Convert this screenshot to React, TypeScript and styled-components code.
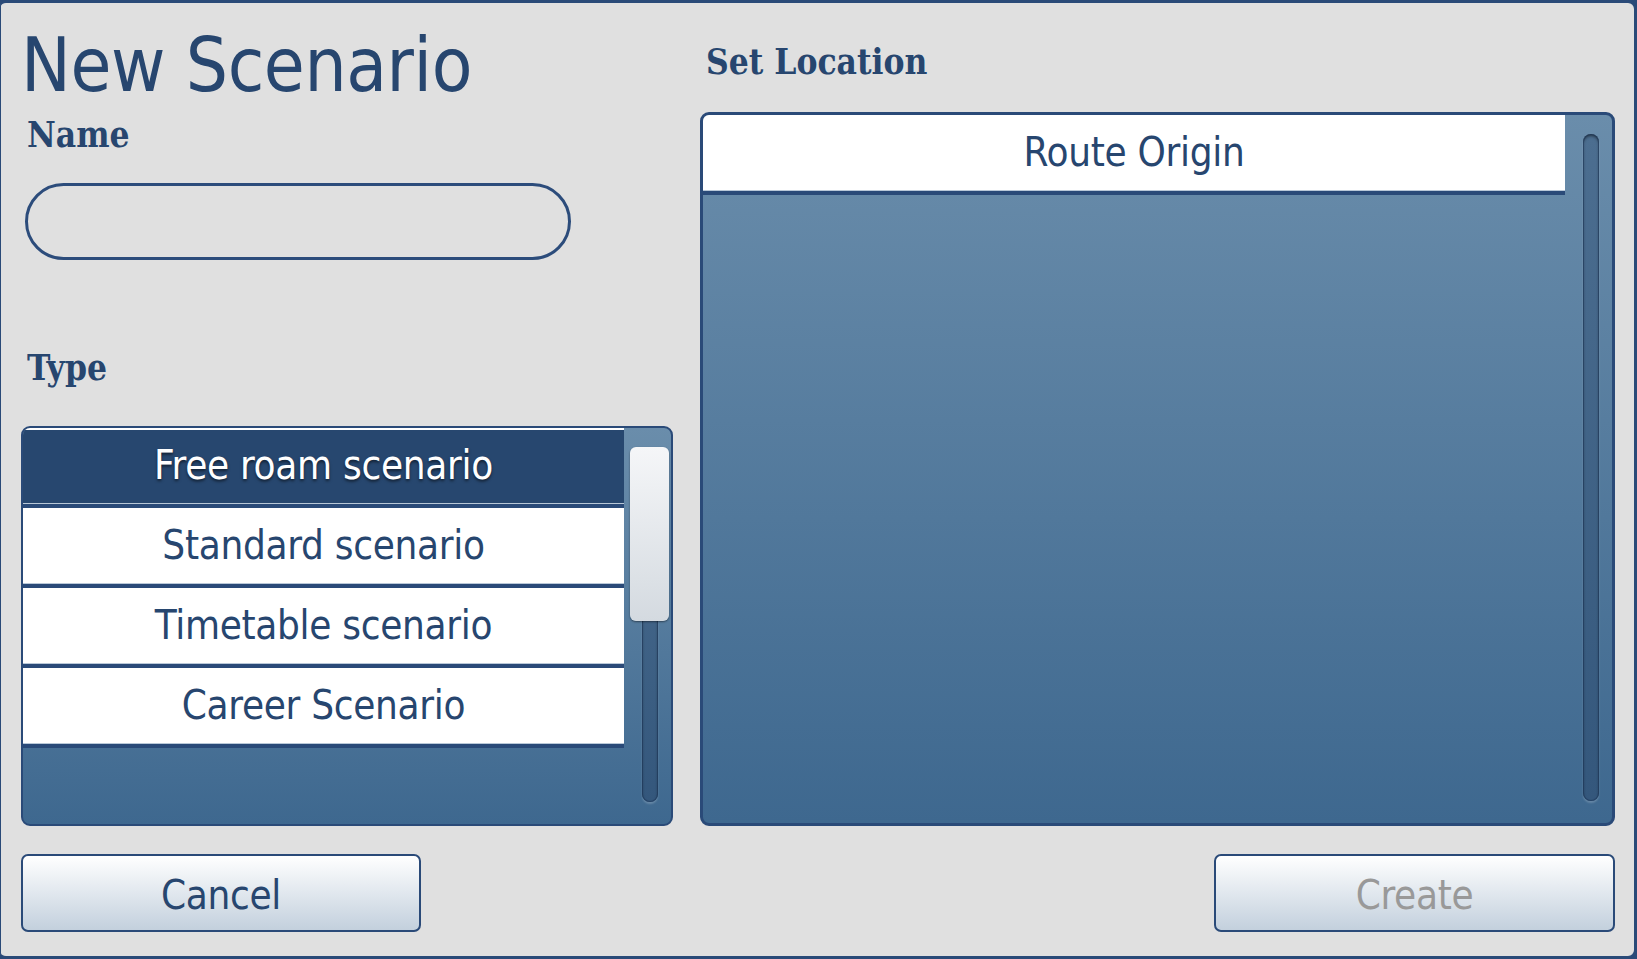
import React from 'react';
import styled, { createGlobalStyle } from 'styled-components';

const GlobalStyle = createGlobalStyle`
  html, body {
    margin: 0;
    padding: 0;
    background: #2a4a78;
  }
  body {
    width: 1637px;
    height: 959px;
    overflow: hidden;
  }
`;

const Dialog = styled.div`
  box-sizing: border-box;
  width: 1637px;
  height: 959px;
  display: flex;
  flex-direction: column;
  padding: 25px 19px 24px 20px;
  background: #e0e0e0;
  border: 3px solid #2a4a78;
  border-left-width: 1px;
  border-radius: 6px 9px 9px 6px;
  font-family: 'DejaVu Sans Condensed', 'DejaVu Sans', sans-serif;
  color: #27466f;
`;

const Main = styled.div`
  flex: 1;
  min-height: 0;
  display: grid;
  grid-template-columns: 652px 1fr;
  column-gap: 27px;
`;

const Column = styled.div`
  display: flex;
  flex-direction: column;
  min-height: 0;
`;

const Title = styled.h1`
  margin: 0;
  font-size: 74px;
  line-height: 74px;
  font-weight: normal;
  letter-spacing: -0.4px;
`;

const Label = styled.div<{ $top: number }>`
  margin-top: ${p => p.$top}px;
  margin-left: 6px;
  font-family: 'DejaVu Serif Condensed', 'DejaVu Serif', serif;
  font-weight: bold;
  font-size: 35px;
  line-height: 34px;
  height: 34px;
`;

const NameInput = styled.input`
  box-sizing: border-box;
  margin: 31px 0 0 4px;
  width: 546px;
  height: 77px;
  padding: 0 30px;
  border: 3px solid #2c4c7b;
  border-radius: 40px;
  background: transparent;
  font-family: inherit;
  font-size: 36px;
  color: #27466f;
  outline: none;
`;

const ListBox = styled.div<{ $top: number; $border: number }>`
  flex: 1;
  min-height: 0;
  margin-top: ${p => p.$top}px;
  display: flex;
  overflow: hidden;
  border: ${p => p.$border}px solid #2a4a78;
  border-radius: 9px;
  background: linear-gradient(#6a8dab, #3e688f);
`;

const Rows = styled.div`
  flex: 1;
  display: flex;
  flex-direction: column;
`;

const Row = styled.div<{ $selected?: boolean }>`
  box-sizing: border-box;
  height: 80px;
  display: flex;
  align-items: center;
  justify-content: center;
  padding-bottom: 2px;
  border-bottom: 4px solid #2a4a78;
  background: ${p => (p.$selected ? '#27476f' : '#ffffff')};
  box-shadow: ${p =>
    p.$selected
      ? 'inset 0 2px 0 #ffffff, inset 0 -1px 0 #b9c8d8'
      : 'inset 0 -1px 0 #b9c8d8'};
  color: ${p => (p.$selected ? '#ffffff' : '#27466f')};
  text-shadow: ${p => (p.$selected ? '0 2px 3px rgba(0, 0, 0, 0.55)' : 'none')};
  font-size: 40px;
  letter-spacing: -0.3px;
`;

const ScrollColumn = styled.div`
  position: relative;
  width: 47px;
  display: flex;
  padding: 19px 0 22px 18px;
  box-sizing: border-box;
`;

const Groove = styled.div`
  width: 16px;
  border-radius: 8px;
  background: linear-gradient(#4c6e90, #34577c);
  box-shadow: inset 0 0 0 1px rgba(30, 55, 90, 0.55), inset 0 2px 3px rgba(0, 0, 0, 0.5),
    0 2px 2px rgba(255, 255, 255, 0.2);
`;

const Thumb = styled.div`
  position: absolute;
  left: 6px;
  top: 19px;
  width: 39px;
  height: 174px;
  border-radius: 6px;
  background: linear-gradient(#f5f6f8, #d4dae0);
  box-shadow: 0 1px 2px rgba(0, 0, 0, 0.45);
`;

const Footer = styled.div`
  margin-top: 28px;
  display: flex;
  justify-content: space-between;
`;

const Button = styled.button<{ $disabled?: boolean; $width: number }>`
  box-sizing: border-box;
  width: ${p => p.$width}px;
  height: 78px;
  padding: 4px 0 0;
  border: 2px solid #2a4a78;
  border-radius: 7px;
  background: linear-gradient(#ffffff, #c3d0dd);
  font-family: 'DejaVu Sans Condensed', 'DejaVu Sans', sans-serif;
  font-size: 40px;
  letter-spacing: -0.3px;
  color: ${p => (p.$disabled ? '#999999' : '#27466f')};
`;

const types = ['Free roam scenario', 'Standard scenario', 'Timetable scenario', 'Career Scenario'];

const App: React.FC = () => {
  return (
    <>
      <GlobalStyle />
      <Dialog>
        <Main>
          <Column>
            <Title>New Scenario</Title>
            <Label $top={16}>Name</Label>
            <NameInput />
            <Label $top={91}>Type</Label>
            <ListBox $top={41} $border={2}>
              <Rows>
                {types.map((t, i) => (
                  <Row key={t} $selected={i === 0}>{t}</Row>
                ))}
              </Rows>
              <ScrollColumn>
                <Groove />
                <Thumb />
              </ScrollColumn>
            </ListBox>
          </Column>
          <Column>
            <Label $top={17}>Set Location</Label>
            <ListBox $top={33} $border={3}>
              <Rows>
                <Row>Route Origin</Row>
              </Rows>
              <ScrollColumn>
                <Groove />
              </ScrollColumn>
            </ListBox>
          </Column>
        </Main>
        <Footer>
          <Button $width={400}>Cancel</Button>
          <Button $width={401} $disabled>Create</Button>
        </Footer>
      </Dialog>
    </>
  );
};

export default App;
